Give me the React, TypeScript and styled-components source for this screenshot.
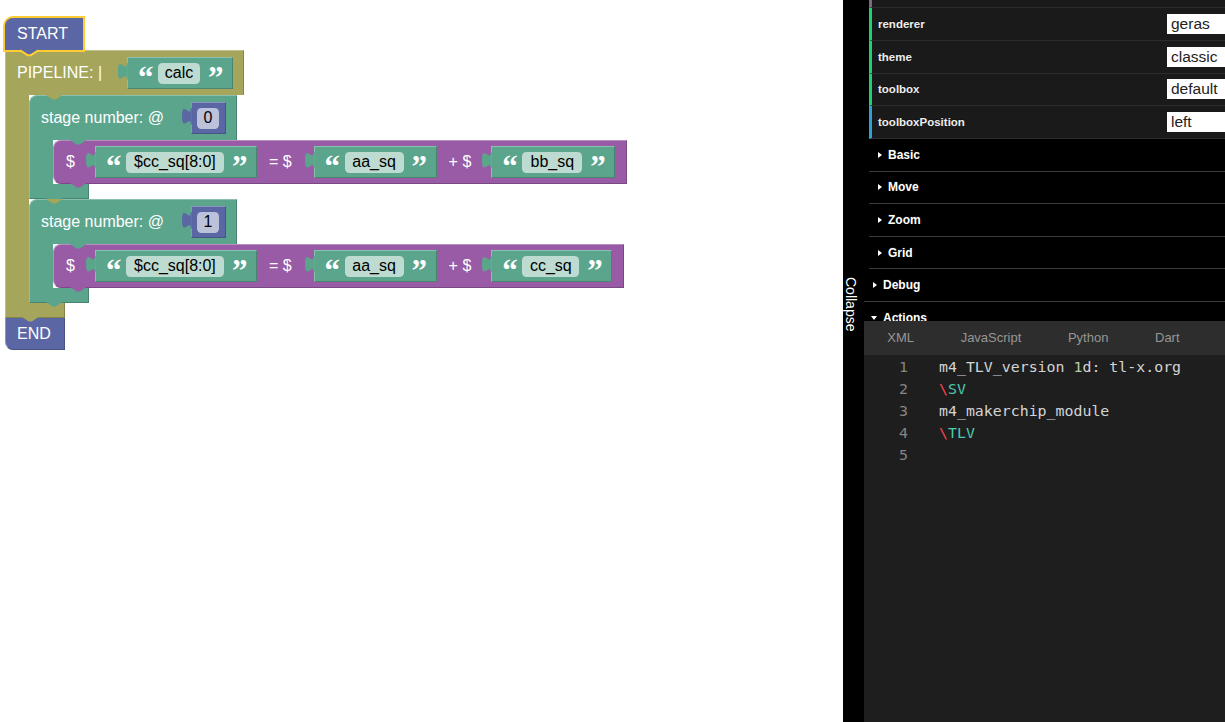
import React from 'react';
import styled, { createGlobalStyle } from 'styled-components';

type Tone = { base: string; light: string; dark: string; field: string };

const blue: Tone = { base: '#5b67a5', light: '#8c95c0', dark: '#495284', field: '#bdc2db' };
const olive: Tone = { base: '#a5a55b', light: '#c0c08c', dark: '#848449', field: '#dbdbbd' };
const green: Tone = { base: '#5ba58c', light: '#8cc0ae', dark: '#498470', field: '#bddbd1' };
const purple: Tone = { base: '#995ba5', light: '#b88cc0', dark: '#7a4984', field: '#d6bddb' };

const GlobalStyle = createGlobalStyle`
  *, *::before, *::after { box-sizing: border-box; }
  html, body { margin: 0; padding: 0; height: 100%; overflow: hidden; }
  #root { height: 100%; }
  body { font-family: "Liberation Sans", Arial, sans-serif; }
`;

const Page = styled.div`
  display: flex;
  width: 100%;
  height: 100vh;
  overflow: hidden;
`;

/* ---------- blockly workspace ---------- */

const Workspace = styled.div`
  flex: none;
  width: 843px;
  height: 100%;
  background: #fff;
  padding: 18px 0 0 5px;
  display: flex;
  flex-direction: column;
  align-items: flex-start;
  font-size: 16px;
  color: #fff;
`;

const StartBlock = styled.div`
  position: relative;
  z-index: 2;
  height: 32px;
  display: flex;
  align-items: center;
  padding: 0 15px 0 12px;
  background: ${blue.base};
  border-radius: 8px 0 0 0;
  box-shadow: 0 0 0 2px #fc3;
`;

const EndBlock = styled.div`
  position: relative;
  height: 32px;
  display: flex;
  align-items: center;
  padding: 0 13px 0 11px;
  background: ${blue.base};
  border-left: 1px solid ${blue.light};
  border-right: 1px solid ${blue.dark};
  border-bottom: 1px solid ${blue.dark};
  border-radius: 0 0 0 8px;
`;

const CBlock = styled.div`
  display: flex;
  flex-direction: column;
  align-items: flex-start;
`;

const CHead = styled.div<{ $t: Tone; $round?: boolean }>`
  position: relative;
  height: 45px;
  display: flex;
  align-items: center;
  padding: 0 10px 0 11px;
  background: ${p => p.$t.base};
  border-top: 1px solid ${p => p.$t.light};
  border-left: 1px solid ${p => p.$t.light};
  border-right: 1px solid ${p => p.$t.dark};
  border-radius: ${p => (p.$round ? '8px 0 0 0' : '0')};
`;

const CBody = styled.div`
  display: flex;
  align-items: stretch;
`;

const Arm = styled.div<{ $t: Tone }>`
  flex: none;
  width: 24px;
  background: ${p => p.$t.base};
  border-left: 1px solid ${p => p.$t.light};
`;

const Stack = styled.div`
  display: flex;
  flex-direction: column;
  align-items: flex-start;
`;

const CFoot = styled.div<{ $t: Tone }>`
  position: relative;
  width: 60px;
  height: 15px;
  background: ${p => p.$t.base};
  border-left: 1px solid ${p => p.$t.light};
  border-right: 1px solid ${p => p.$t.dark};
  border-bottom: 1px solid ${p => p.$t.dark};
`;

const Statement = styled.div<{ $t: Tone }>`
  position: relative;
  height: 44px;
  display: flex;
  align-items: center;
  padding: 0 11px 0 12px;
  background: ${p => p.$t.base};
  border-top: 1px solid ${p => p.$t.light};
  border-left: 1px solid ${p => p.$t.light};
  border-right: 1px solid ${p => p.$t.dark};
  border-bottom: 1px solid ${p => p.$t.dark};
  border-radius: 8px 0 0 8px;
`;

const Label = styled.span<{ $ml?: number }>`
  flex: none;
  margin-left: ${p => p.$ml ?? 0}px;
  white-space: pre;
  color: #fff;
  line-height: 1;
`;

const ValueBody = styled.div<{ $t: Tone; $ml: number; $num?: boolean }>`
  position: relative;
  flex: none;
  margin-left: ${p => p.$ml}px;
  height: 32px;
  display: flex;
  align-items: center;
  gap: 8px;
  padding: ${p => (p.$num ? '0 6px 0 5px' : '0 12px 0 10px')};
  background: ${p => p.$t.base};
  border-top: 1px solid ${p => p.$t.light};
  border-left: 1px solid ${p => p.$t.light};
  border-right: 1px solid ${p => p.$t.dark};
  border-bottom: 1px solid ${p => p.$t.dark};
`;

const Field = styled.span<{ $w: number; $bg: string }>`
  flex: none;
  width: ${p => p.$w}px;
  height: 21px;
  border-radius: 4.4px;
  background: ${p => p.$bg};
  color: #000;
  display: flex;
  align-items: center;
  justify-content: center;
  font-size: 16px;
  white-space: pre;
`;

const Quote = styled.span`
  flex: none;
  width: 12px;
  height: 12px;
  overflow: visible;
  font-family: "Liberation Serif", serif;
  font-weight: bold;
  font-size: 31px;
  line-height: 22px;
  color: #fff;
  text-align: center;
`;

const NotchSvg = styled.svg<{ $bottom?: boolean }>`
  position: absolute;
  left: 15.5px;
  top: ${p => (p.$bottom ? '100%' : '-1px')};
  z-index: 1;
  overflow: visible;
`;

const TabSvg = styled.svg`
  position: absolute;
  left: -9.8px;
  top: 5px;
  overflow: visible;
`;

function Notch({ fill, bottom, stroke }: { fill: string; bottom?: boolean; stroke?: string }) {
  return (
    <NotchSvg $bottom={bottom} width="16.5" height="4.4" viewBox="0 0 16.5 4.4">
      <path d="M0 0 L6.6 4.4 L9.9 4.4 L16.5 0 Z" fill={fill} />
      {stroke && <path d="M-1 0.3 L6.6 5.2 L9.9 5.2 L17.5 0.3" fill="none" stroke={stroke} strokeWidth="2" />}
    </NotchSvg>
  );
}

function OutputTab({ fill }: { fill: string }) {
  return (
    <TabSvg width="9.8" height="16.5" viewBox="0 0 9.8 16.5">
      <path d="M9.8 0 L8.8 0 c0 11 -8.8 -8.8 -8.8 8.25 s8.8 -2.75 8.8 8.25 L9.8 16.5 Z" fill={fill} />
    </TabSvg>
  );
}

function TextValue({ text, w, ml }: { text: string; w: number; ml: number }) {
  return (
    <ValueBody $t={green} $ml={ml}>
      <OutputTab fill={green.base} />
      <Quote>“</Quote>
      <Field $w={w} $bg={green.field}>{text}</Field>
      <Quote>”</Quote>
    </ValueBody>
  );
}

function NumberValue({ n }: { n: string }) {
  return (
    <ValueBody $t={blue} $ml={27} $num>
      <OutputTab fill={blue.base} />
      <Field $w={22} $bg={blue.field}>{n}</Field>
    </ValueBody>
  );
}

type Assign = { target: string; tw: number; a: string; aw: number; b: string; bw: number };

function Stage({ n, assign }: { n: string; assign: Assign }) {
  return (
    <CBlock>
      <CHead $t={green} $round>
        <Notch fill={olive.base} />
        <Label>stage number: @</Label>
        <NumberValue n={n} />
      </CHead>
      <CBody>
        <Arm $t={green} />
        <Stack>
          <Statement $t={purple}>
            <Notch fill={green.base} />
            <Label>$</Label>
            <TextValue text={assign.target} w={assign.tw} ml={20} />
            <Label $ml={12}>= $</Label>
            <TextValue text={assign.a} w={assign.aw} ml={22} />
            <Label $ml={12}>+ $</Label>
            <TextValue text={assign.b} w={assign.bw} ml={20} />
            <Notch fill={purple.base} bottom />
          </Statement>
        </Stack>
      </CBody>
      <CFoot $t={green}>
        <Notch fill={green.base} bottom />
      </CFoot>
    </CBlock>
  );
}

const stages: { n: string; assign: Assign }[] = [
  { n: '0', assign: { target: '$cc_sq[8:0]', tw: 98, a: 'aa_sq', aw: 59, b: 'bb_sq', bw: 60 } },
  { n: '1', assign: { target: '$cc_sq[8:0]', tw: 98, a: 'aa_sq', aw: 59, b: 'cc_sq', bw: 57 } },
];

/* ---------- right side: dat.gui + code ---------- */

const Side = styled.div`
  flex: 1;
  min-width: 0;
  display: flex;
  background: #000;
`;

const CollapseBar = styled.div`
  flex: none;
  width: 21px;
  padding: 277px 0 0 1px;
`;

const CollapseText = styled.span`
  display: block;
  writing-mode: vertical-rl;
  color: #fff;
  font-size: 14px;
  line-height: 14px;
`;

const Panel = styled.div`
  flex: 1;
  min-width: 0;
  display: flex;
  flex-direction: column;
`;

const Gui = styled.div`
  flex: none;
  height: 321px;
  overflow: hidden;
  background: #000;
`;

const Nested = styled.div`
  margin-top: -24.75px;
  padding-left: 5px;
`;

const PropRow = styled.div<{ $accent: string }>`
  height: 32.75px;
  display: flex;
  align-items: center;
  background: #1a1a1a;
  border-left: 3px solid ${p => p.$accent};
  border-bottom: 1px solid #2c2c2c;
  padding-left: 6px;
`;

const PropName = styled.span`
  flex: none;
  width: 289px;
  color: #eee;
  font-size: 11.5px;
  font-weight: bold;
  text-shadow: 0 -1px 0 #111;
`;

const SelectBox = styled.div`
  flex: none;
  width: 90px;
  height: 20px;
  display: flex;
  align-items: center;
  padding-left: 4px;
  background: #fff;
  color: #222;
  font-size: 15.5px;
`;

const FolderTitle = styled.div`
  height: 32.6px;
  display: flex;
  align-items: center;
  gap: 6px;
  padding-left: 9px;
  background: #000;
  border-bottom: 1px solid #3b3b3b;
  color: #fff;
  font-size: 12px;
  font-weight: bold;
  text-shadow: 0 -1px 0 #111;
`;

const Arrow = styled.span<{ $open?: boolean }>`
  flex: none;
  width: 0;
  height: 0;
  ${p =>
    p.$open
      ? `border-top: 4px solid #fff; border-left: 3px solid transparent; border-right: 3px solid transparent; margin-left: -2px;`
      : `border-left: 4px solid #fff; border-top: 3px solid transparent; border-bottom: 3px solid transparent;`}
`;

const Editor = styled.div`
  flex: 1;
  display: flex;
  flex-direction: column;
  background: #1e1e1e;
`;

const TabBar = styled.div`
  flex: none;
  height: 34px;
  display: flex;
  background: #2d2d2d;
`;

const TabItem = styled.div`
  padding: 0 23.3px;
  line-height: 34px;
  font-size: 13px;
  color: #969696;
`;

const CodeArea = styled.div`
  padding-top: 1px;
  font-family: "DejaVu Sans Mono", "Liberation Mono", monospace;
  font-size: 14.9px;
`;

const CodeLine = styled.div`
  height: 22px;
  display: flex;
  align-items: center;
`;

const LineNo = styled.span`
  flex: none;
  width: 44px;
  text-align: right;
  color: #858585;
`;

const LineText = styled.span`
  margin-left: 31px;
  color: #d4d4d4;
  white-space: pre;
`;

const Tok = styled.span<{ $c: string }>`
  color: ${p => p.$c};
`;

const props = [
  { name: 'renderer', value: 'geras', accent: '#1ed36f' },
  { name: 'theme', value: 'classic', accent: '#1ed36f' },
  { name: 'toolbox', value: 'default', accent: '#1ed36f' },
  { name: 'toolboxPosition', value: 'left', accent: '#2fa1d6' },
];

export default function App() {
  return (
    <>
      <GlobalStyle />
      <Page>
        <Workspace>
          <StartBlock>
            START
            <Notch fill={blue.base} bottom stroke="#fc3" />
          </StartBlock>
          <CBlock>
            <CHead $t={olive}>
              <Label>PIPELINE: |</Label>
              <TextValue text="calc" w={42} ml={25} />
            </CHead>
            <CBody>
              <Arm $t={olive} />
              <Stack>
                {stages.map(s => (
                  <Stage key={s.n} n={s.n} assign={s.assign} />
                ))}
              </Stack>
            </CBody>
            <CFoot $t={olive}>
              <Notch fill={olive.base} bottom />
            </CFoot>
          </CBlock>
          <EndBlock>END</EndBlock>
        </Workspace>

        <Side>
          <CollapseBar>
            <CollapseText>Collapse</CollapseText>
          </CollapseBar>
          <Panel>
            <Gui>
              <Nested>
                <PropRow $accent="#806787" />
                {props.map(p => (
                  <PropRow key={p.name} $accent={p.accent}>
                    <PropName>{p.name}</PropName>
                    <SelectBox>{p.value}</SelectBox>
                  </PropRow>
                ))}
                {['Basic', 'Move', 'Zoom', 'Grid'].map(f => (
                  <FolderTitle key={f}>
                    <Arrow />
                    {f}
                  </FolderTitle>
                ))}
              </Nested>
              <FolderTitle>
                <Arrow />
                Debug
              </FolderTitle>
              <FolderTitle>
                <Arrow $open />
                Actions
              </FolderTitle>
            </Gui>
            <Editor>
              <TabBar>
                <TabItem>XML</TabItem>
                <TabItem>JavaScript</TabItem>
                <TabItem>Python</TabItem>
                <TabItem>Dart</TabItem>
              </TabBar>
              <CodeArea>
                <CodeLine>
                  <LineNo>1</LineNo>
                  <LineText>
                    m4_TLV_version <Tok $c="#b5cea8">1</Tok>d: tl-x.org
                  </LineText>
                </CodeLine>
                <CodeLine>
                  <LineNo>2</LineNo>
                  <LineText>
                    <Tok $c="#f44747">\</Tok>
                    <Tok $c="#4ec9b0">SV</Tok>
                  </LineText>
                </CodeLine>
                <CodeLine>
                  <LineNo>3</LineNo>
                  <LineText>m4_makerchip_module</LineText>
                </CodeLine>
                <CodeLine>
                  <LineNo>4</LineNo>
                  <LineText>
                    <Tok $c="#f44747">\</Tok>
                    <Tok $c="#4ec9b0">TLV</Tok>
                  </LineText>
                </CodeLine>
                <CodeLine>
                  <LineNo>5</LineNo>
                  <LineText />
                </CodeLine>
              </CodeArea>
            </Editor>
          </Panel>
        </Side>
      </Page>
    </>
  );
}
